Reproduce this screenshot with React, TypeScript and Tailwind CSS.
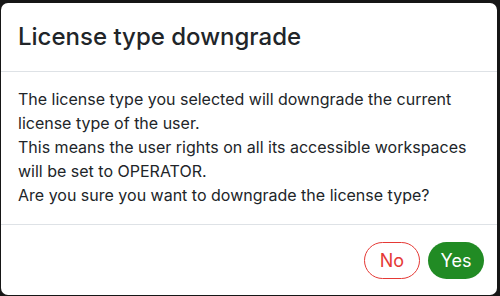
export default function App() {
    return (
        <div
            className="w-[500px] h-[296px] bg-[#161616] pt-[3px] pl-[1px]"
            style={{ fontFamily: 'Inter, "Liberation Sans", sans-serif' }}
        >
            <div className="w-[496px] h-[292px] bg-white rounded-[7px] flex flex-col text-[#212529]">
                <div className="h-[69px] px-[17px] flex items-center border-b border-[#dee2e6]">
                    <h2 className="text-[24px] leading-[29px] font-medium pb-[1px]">License type downgrade</h2>
                </div>
                <div className="px-[17px] pt-[15px] flex-1 text-[16px] leading-[24px]">
                    <p>The license type you selected will downgrade the current license type of the user.</p>
                    <p>This means the user rights on all its accessible workspaces will be set to OPERATOR.</p>
                    <p>Are you sure you want to downgrade the license type?</p>
                </div>
                <div className="h-[71px] border-t border-[#dee2e6] flex items-center justify-end gap-[8px] pr-[13px]">
                    <button className="w-[56px] h-[37px] rounded-full border border-[#e53935] text-[#e53935] text-[18px]">
                        No
                    </button>
                    <button className="w-[56px] h-[37px] rounded-full bg-[#218b24] text-white text-[18px]">
                        Yes
                    </button>
                </div>
            </div>
        </div>
    )
}
